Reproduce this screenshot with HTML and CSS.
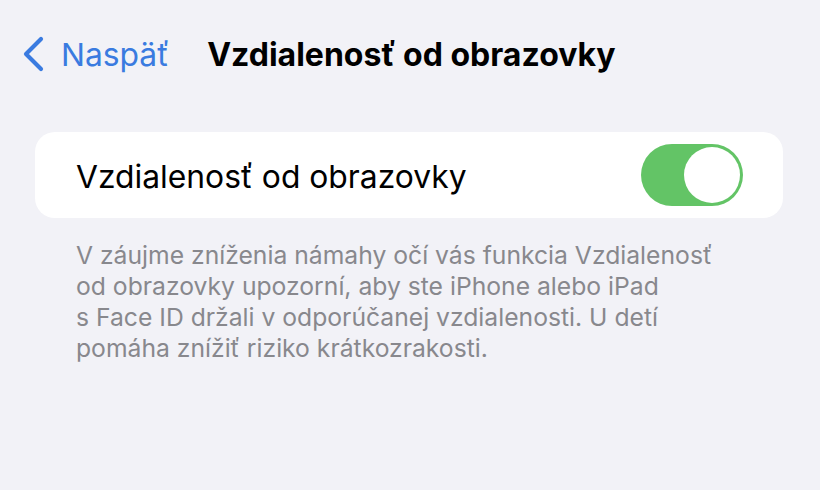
FILE: index.html
```html
<!DOCTYPE html>
<html>
<head>
    <title>Vzdialenosť od obrazovky</title>
    <meta charset="UTF-8" />
    <link rel="stylesheet" href="styles.css">
</head>
<body>
    <div class="navBar">
        <a class="back" href="#">
            <svg class="chevron" width="24" height="36" viewBox="0 0 24 36">
                <path d="M20 3 L5 18 L20 33" fill="none" stroke="#3a7be0" stroke-width="4.2" stroke-linecap="round" stroke-linejoin="round"/>
            </svg>
            <span class="backLabel">Naspäť</span>
        </a>
        <div class="navTitle">Vzdialenosť od obrazovky</div>
    </div>

    <div class="group">
        <div class="cell">
            <div class="cellLabel">Vzdialenosť od obrazovky</div>
            <div class="switch on"><div class="knob"></div></div>
        </div>
    </div>

    <div class="footer">
        V záujme zníženia námahy očí vás funkcia Vzdialenosť<br>
        od obrazovky upozorní, aby ste iPhone alebo iPad<br>
        s Face ID držali v odporúčanej vzdialenosti. U detí<br>
        pomáha znížiť riziko krátkozrakosti.
    </div>
</body>
</html>
```

FILE: styles.css
```css
body
{
    margin: 0;
    font-family: Inter, "Noto Sans", sans-serif;
    background-color: #f2f2f7;
    width: 820px;
    height: 490px;
    overflow: hidden;
}

.navBar
{
    display: flex;
    align-items: center;
    height: 50px;
    padding: 29px 0 0 21px;
}

.back
{
    display: flex;
    align-items: center;
    gap: 16px;
    color: #3a7be0;
    text-decoration: none;
}

.backLabel
{
    font-size: 31.8px;
}

.navTitle
{
    margin-left: 38px;
    font-size: 32px;
    font-weight: 700;
    color: #000;
}

.group
{
    margin: 53px 37px 0 35px;
    background: #fff;
    border-radius: 20px;
}

.cell
{
    display: flex;
    align-items: center;
    justify-content: space-between;
    height: 86px;
    padding: 0 40px 0 41px;
}

.cellLabel
{
    font-size: 31.8px;
    color: #000;
    padding-top: 3px;
}

.switch
{
    width: 102px;
    height: 62px;
    border-radius: 31px;
    background: #e9e9ea;
    display: flex;
    align-items: center;
    padding: 0 3px;
    box-sizing: border-box;
}

.switch.on
{
    background: #63c466;
    justify-content: flex-end;
}

.knob
{
    width: 56px;
    height: 56px;
    border-radius: 50%;
    background: #fff;
}

.footer
{
    margin: 22px 0 0 76px;
    font-size: 24.7px;
    line-height: 31px;
    color: #88888d;
}
```
